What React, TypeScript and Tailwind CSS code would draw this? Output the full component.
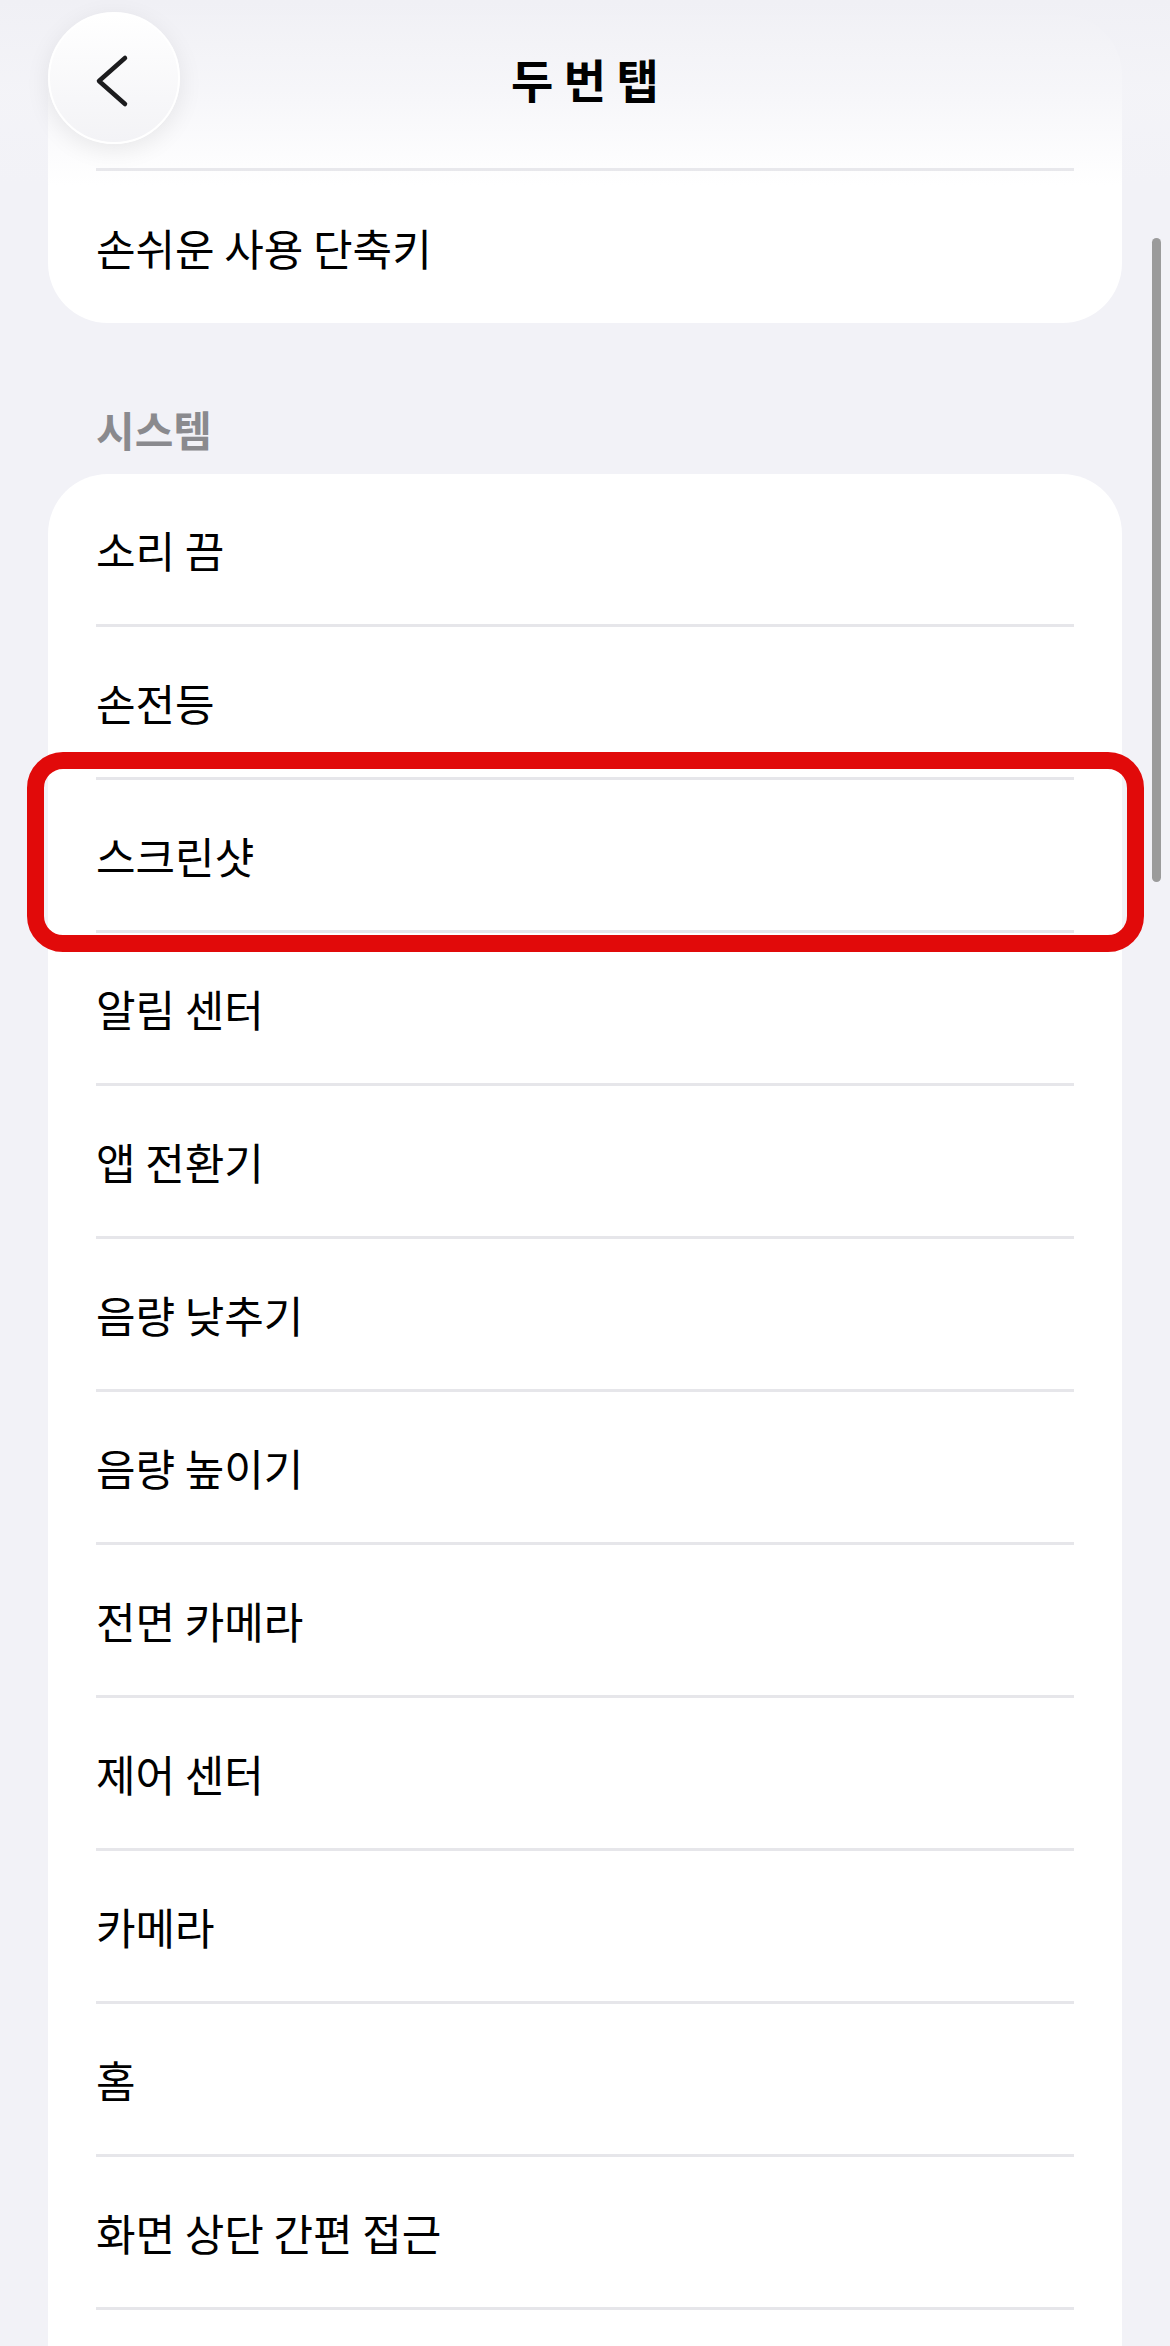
const font = { fontFamily: '"Noto Sans CJK KR", "Noto Sans", sans-serif' }

const systemItems = [
  '소리 끔',
  '손전등',
  '스크린샷',
  '알림 센터',
  '앱 전환기',
  '음량 낮추기',
  '음량 높이기',
  '전면 카메라',
  '제어 센터',
  '카메라',
  '홈',
  '화면 상단 간편 접근',
]

function Row({ label }: { label: string }) {
  return (
    <div>
      <div className="h-[150px] flex items-center px-12">
        <span className="text-[43px] leading-[50px] text-black">{label}</span>
      </div>
      <div className="mx-12 h-[3px] bg-[#e6e6ea]" />
    </div>
  )
}

export default function App() {
  return (
    <div className="relative h-[2346px] overflow-hidden bg-[#f2f2f7]" style={font}>
      <div className="px-12 pt-[15px]">
        {/* group scrolled under the nav bar */}
        <div className="rounded-[60px] bg-white">
          <div className="h-[153px]" />
          <div className="mx-12 h-[3px] bg-[#e6e6ea]" />
          <div className="h-[152px] flex items-center px-12">
            <span className="text-[43px] leading-[50px] text-black">손쉬운 사용 단축키</span>
          </div>
        </div>

        <div className="h-[151px] flex items-end pb-[20px] px-12">
          <span className="text-[42px] leading-[50px] font-semibold text-[#8a8a8e]">시스템</span>
        </div>

        <div className="rounded-t-[60px] bg-white pb-[60px]">
          {systemItems.map(item => (
            <Row key={item} label={item} />
          ))}
        </div>
      </div>

      {/* nav bar blur */}
      <div className="absolute top-0 inset-x-0 h-[185px] bg-gradient-to-b from-[#f0f0f5] via-[#f4f4f8]/80 to-transparent" />

      <button className="absolute left-[48px] top-[12px] w-[132px] h-[132px] rounded-full bg-gradient-to-b from-white to-[#f3f3f6] border-2 border-white shadow-[0_6px_24px_rgba(0,0,0,0.08)] flex items-center justify-center">
        <svg width="132" height="132" viewBox="0 0 132 132" className="absolute inset-0">
          <polyline
            points="75,44 49,67 75,90"
            fill="none"
            stroke="#1c1c1e"
            strokeWidth="4.5"
            strokeLinecap="round"
            strokeLinejoin="round"
          />
        </svg>
      </button>

      <div className="absolute top-[50px] inset-x-0 flex justify-center">
        <span className="text-[46px] leading-[56px] font-semibold text-black">두 번 탭</span>
      </div>

      {/* highlight */}
      <div className="absolute left-[27px] top-[752px] w-[1117px] h-[200px] rounded-[36px] border-[17px] border-[#e10a0a]" />

      {/* scroll indicator */}
      <div className="absolute left-[1152px] top-[238px] w-[9px] h-[644px] rounded-full bg-[#9b9b9b]" />
    </div>
  )
}
